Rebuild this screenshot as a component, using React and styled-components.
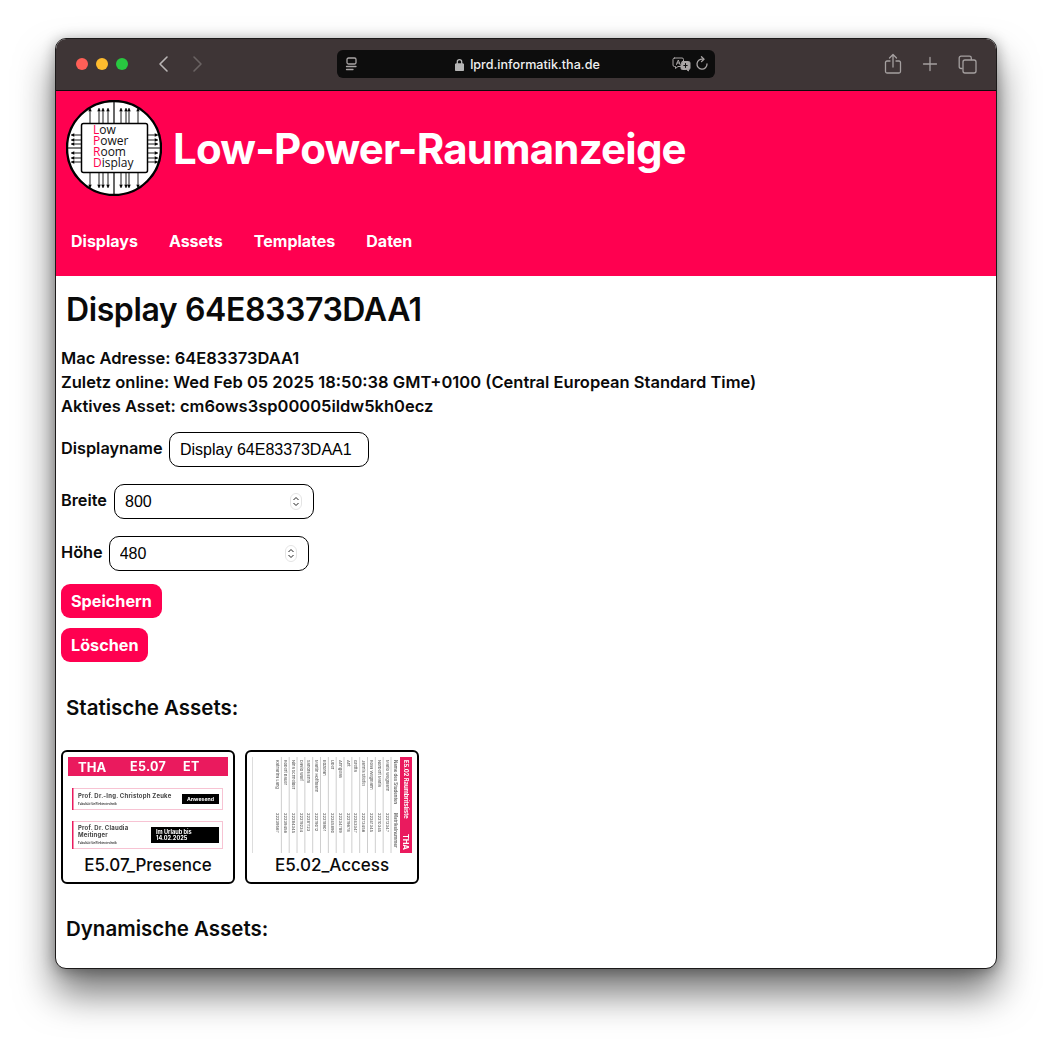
import React from "react";
import styled, { createGlobalStyle } from "styled-components";

const RED = "#ff0050";

const GlobalStyle = createGlobalStyle`
  html, body {
    margin: 0;
    padding: 0;
    background: #fff;
  }
  body {
    width: 1052px;
    height: 1042px;
    overflow: hidden;
    font-family: Inter, "Liberation Sans", sans-serif;
  }
`;

const Stage = styled.div`
  padding: 38px 55px 0;
  height: 1042px;
  box-sizing: border-box;
`;

const Window = styled.div`
  width: 942px;
  height: 931px;
  box-sizing: border-box;
  border: 1px solid #1c1a1a;
  border-radius: 11px;
  overflow: hidden;
  background: #fff;
  box-shadow: 0 24px 38px rgba(0, 0, 0, 0.55), 0 2px 14px rgba(0, 0, 0, 0.32);
`;

const TitleBar = styled.div`
  height: 52px;
  box-sizing: border-box;
  background: #3e3536;
  border-bottom: 1px solid #0c0a0a;
  display: flex;
  align-items: center;
  padding: 0 19px 1px 20px;
`;

const Dots = styled.div`
  display: flex;
  gap: 8px;
`;

const Dot = styled.span`
  width: 12px;
  height: 12px;
  border-radius: 50%;
  background: ${(p) => p.$color};
`;

const NavArrows = styled.div`
  display: flex;
  gap: 23px;
  margin-left: 29px;
  width: 56px;
`;

const Icon = styled.svg`
  display: block;
  flex: none;
  fill: none;
  stroke: ${(p) => p.$stroke || "#a9a5a5"};
  stroke-width: ${(p) => p.$sw || 1.3};
  stroke-linecap: round;
  stroke-linejoin: round;
`;

const AddressBar = styled.div`
  width: 378px;
  height: 28px;
  margin-left: 124px;
  background: #0d0d0d;
  border-radius: 6px;
  display: flex;
  align-items: center;
  padding: 0 6px 0 8px;
  box-sizing: border-box;
  color: #f0f0f0;
`;

const Url = styled.div`
  flex: 1;
  display: flex;
  justify-content: center;
  align-items: center;
  gap: 6px;
  font-size: 12.6px;
  font-weight: 500;
  padding-left: 25px;
`;

const AddressTools = styled.div`
  display: flex;
  align-items: center;
  gap: 4px;
`;

const WindowTools = styled.div`
  margin-left: auto;
  display: flex;
  align-items: center;
  gap: 20px;
`;

const Header = styled.header`
  background: ${RED};
  height: 185px;
  box-sizing: border-box;
  padding: 9px 10px 0;
  color: #fff;
`;

const Brand = styled.div`
  display: flex;
  align-items: center;
  gap: 11px;
`;

const Title = styled.h1`
  margin: 0;
  padding-top: 1px;
  font-size: 42px;
  font-weight: 700;
  letter-spacing: -0.8px;
  line-height: 94px;
`;

const Nav = styled.nav`
  display: flex;
  gap: 31px;
  margin-top: 33px;
  padding-left: 5px;
`;

const NavLink = styled.a`
  font-size: 16px;
  font-weight: 700;
  line-height: 24px;
  color: #fff;
`;

const Main = styled.main`
  padding: 14px 5px 0;
  color: #0a0a0a;
`;

const PageTitle = styled.h2`
  margin: 0 0 16px 5px;
  font-size: 32px;
  font-weight: 600;
  line-height: 40px;
  letter-spacing: -0.4px;
`;

const InfoLine = styled.div`
  font-size: 16.5px;
  font-weight: 600;
  line-height: 24px;
`;

const Form = styled.form`
  margin-top: 14px;
  display: flex;
  flex-direction: column;
  align-items: flex-start;
`;

const Field = styled.label`
  display: flex;
  align-items: center;
  gap: 6px;
  height: 35px;
  margin-bottom: 17px;
  font-size: 16.3px;
  font-weight: 600;
  line-height: 32px;

  &:last-of-type {
    margin-bottom: 13px;
  }
`;

const FieldLabel = styled.span`
  display: block;
  margin-top: -3px;
  min-width: ${(p) => p.$width}px;
`;

const InputBox = styled.span`
  position: relative;
  display: block;
`;

const TextInput = styled.input`
  display: block;
  width: 200px;
  height: 35px;
  box-sizing: border-box;
  border: 1px solid #000;
  border-radius: 10px;
  padding: 0 10px;
  outline: none;
  background: #fff;
  color: #000;
  font-family: "Liberation Sans", Arial, sans-serif;
  font-size: 16px;
`;

const Stepper = styled.svg`
  position: absolute;
  right: 12px;
  top: 9px;
  width: 12px;
  height: 17px;
  fill: none;
  stroke: #222;
  stroke-width: 1;
`;

const ActionButton = styled.button`
  display: block;
  height: 34px;
  margin-bottom: 10px;
  padding: 0 10px;
  border: 0;
  border-radius: 9px;
  background: ${RED};
  color: #fff;
  font-family: inherit;
  font-size: 16.2px;
  font-weight: 700;
`;

const SectionTitle = styled.h3`
  margin: ${(p) => p.$top}px 0 0 5px;
  font-size: 20.5px;
  font-weight: 600;
  line-height: 28px;
`;

const AssetGrid = styled.div`
  display: flex;
  gap: 10px;
  margin-top: 28px;
`;

const AssetCard = styled.div`
  width: 174px;
  height: 134px;
  box-sizing: border-box;
  border: 2px solid #000;
  border-radius: 6px;
  padding: 5px 5px 0;
  display: flex;
  flex-direction: column;
  align-items: center;
`;

const Thumb = styled.svg`
  display: block;
  width: 160px;
  height: 96px;
  flex: none;
  filter: blur(0.4px);
`;

const AssetName = styled.div`
  margin-top: 1px;
  font-size: 17px;
  font-weight: 500;
  line-height: 22px;
`;

const TOP_PINS = [90, 99, 103, 108, 121, 126, 129, 138];
const SIDE_PINS = [135, 140, 144, 153, 158, 162];

function Logo() {
  // drawn in page pixels, offset by the logo box at 66,100
  return (
    <Icon width="96" height="96" viewBox="66 100 96 96" $stroke="#000">
      <circle cx="114" cy="148" r="47" fill="#fff" stroke="#000" strokeWidth="2.4" />
      <path d="M114 101V195M67 148H161" stroke="#000" strokeWidth="1.2" />
      {TOP_PINS.map((x) => (
        <g key={x} strokeWidth="0.9" stroke="#000" fill="#000">
          <path d={`M${x} 109V123M${x} 172V187`} />
          <path d={`M${x - 1.4} 111L${x} 108L${x + 1.4} 111ZM${x - 1.4} 185L${x} 188L${x + 1.4} 185Z`} strokeWidth="0.3" />
        </g>
      ))}
      {SIDE_PINS.map((y) => (
        <g key={y} strokeWidth="0.9" stroke="#000" fill="#000">
          <path d={`M72 ${y}H81M147 ${y}H157`} />
          <path d={`M74 ${y - 1.4}L71 ${y}L74 ${y + 1.4}ZM155 ${y - 1.4}L158 ${y}L155 ${y + 1.4}Z`} strokeWidth="0.3" />
        </g>
      ))}
      <rect x="81.500" y="123.500" width="66" height="49" rx="2" fill="#fff" stroke="#000" strokeWidth="1.5" />
      <text fontFamily="'Open Sans', 'Liberation Sans', sans-serif" fontSize="12" fontWeight="500" stroke="none" fill="#111">
        <tspan x="93" y="134" fill={RED}>L</tspan><tspan>ow</tspan>
        <tspan x="93" y="145" fill={RED}>P</tspan><tspan>ower</tspan>
        <tspan x="93" y="156" fill={RED}>R</tspan><tspan>oom</tspan>
        <tspan x="93" y="167" fill={RED}>D</tspan><tspan>isplay</tspan>
      </text>
    </Icon>
  );
}

function PresenceThumb() {
  return (
    <Thumb viewBox="0 0 160 96">
      <rect width="160" height="96" fill="#fff" />
      <rect y="0" width="160" height="19" fill="#ea1a5e" />
      <g fontFamily="Inter, sans-serif" fontWeight="700" fill="#fff">
        <text x="10" y="14.500" fontSize="13" letterSpacing="0">THA</text>
        <text x="62" y="14" fontSize="12.500" letterSpacing="0.3">E5.07</text>
        <text x="115" y="14" fontSize="12.500" letterSpacing="0.3">ET</text>
      </g>
      <rect x="4.500" y="31.500" width="150" height="21" fill="#fff" stroke="#f7c3d3" />
      <rect x="4" y="31" width="1.500" height="22" fill="#ea1a5e" />
      <rect x="4.500" y="64.500" width="150" height="27" fill="#fff" stroke="#f7c3d3" />
      <rect x="4" y="64" width="1.500" height="28" fill="#ea1a5e" />
      <g fontFamily="Inter, sans-serif" fontWeight="700" fill="#444">
        <text x="10" y="41" fontSize="6" letterSpacing="0.2">Prof. Dr.-Ing. Christoph Zeuke</text>
        <text x="10" y="47.500" fontSize="3">Fakultät für Elektrotechnik</text>
        <text x="10" y="73" fontSize="6" letterSpacing="0.2">Prof. Dr. Claudia</text>
        <text x="10" y="80" fontSize="6" letterSpacing="0.2">Meitinger</text>
        <text x="10" y="87" fontSize="3">Fakultät für Elektrotechnik</text>
      </g>
      <rect x="114" y="37" width="37" height="10" fill="#000" />
      <rect x="83" y="70" width="68" height="16" fill="#000" />
      <g fontFamily="Inter, sans-serif" fontWeight="700" fill="#fff">
        <text x="119" y="43.800" fontSize="5.200">Anwesend</text>
        <text x="88" y="77" fontSize="5.600">Im Urlaub bis</text>
        <text x="88" y="83" fontSize="5.600">14.02.2025</text>
      </g>
    </Thumb>
  );
}

const STUDENTS = [
  ["Mario Wegmann", "22212347"],
  ["Norbert Maria", "22210345"],
  ["Rosa Wegmann", "22241345"],
  ["Jannis Stiefel", "22213456"],
  ["Gretta", "22243347"],
  ["Ant", "22219678"],
  ["Anngelas", "22234789"],
  ["Uber", "22245890"],
  ["Edzoran", "22218901"],
  ["Martin Hoffmann", "22219012"],
  ["Sandra Ehm", "22281123"],
  ["David Wolf", "22219234"],
  ["Nina Schneider", "22284345"],
  ["Robert Bauer", "22239456"],
  ["Katharina Lang", "22239567"],
];

function AccessThumb() {
  return (
    <Thumb viewBox="0 0 160 96">
      <rect width="160" height="96" fill="#fff" />
      <rect x="148" y="0" width="12" height="96" fill="#ea1a5e" />
      <g transform="translate(152 3) rotate(90)" fontFamily="Inter, sans-serif" fontWeight="700" fill="#fff">
        <text x="0" y="0" fontSize="5.800">E5.02 Raumbritsliste</text>
        <text x="74" y="1" fontSize="7.600" letterSpacing="-0.3">THA</text>
      </g>
      <g transform="translate(141.500 3) rotate(90)" fontFamily="Inter, sans-serif" fontWeight="600" fontSize="4.400" fill="#666">
        <text x="0" y="0">Name des Studenten</text>
        <text x="53" y="0">Matrikelnummer</text>
      </g>
      {STUDENTS.map(([name, id], i) => (
        <g key={name}>
          <path d={`M${139 - i * 7.830} 0V96`} stroke="#c2c2c2" strokeWidth="0.8" />
          <g transform={`translate(${133.700 - i * 7.830} 3) rotate(90)`} fontFamily="Inter, sans-serif" fontWeight="500" fontSize="4" fill="#666">
            <text x="0" y="0">{name}</text>
            <text x="53" y="0">{id}</text>
          </g>
        </g>
      ))}
      <path d="M0.500 0V96" stroke="#d4d4d4" strokeWidth="0.8" />
    </Thumb>
  );
}

export default function App() {
  return (
    <Stage>
      <GlobalStyle />
      <Window>
        <TitleBar>
          <Dots>
            <Dot $color="#ff5f57" />
            <Dot $color="#febc2e" />
            <Dot $color="#28c840" />
          </Dots>
          <NavArrows>
            <Icon width="12" height="18" viewBox="0 0 12 18" $stroke="#b9b5b5" $sw={1.6}>
              <path d="M10 2L3 9L10 16" />
            </Icon>
            <Icon width="12" height="18" viewBox="0 0 12 18" $stroke="#6a6363" $sw={1.6}>
              <path d="M2 2L9 9L2 16" />
            </Icon>
          </NavArrows>
          <AddressBar>
            <Icon width="13" height="14" viewBox="0 0 13 14">
              <rect x="2" y="1" width="9" height="6" rx="1.500" />
              <path d="M1.500 9.500H11M1.500 12.500H8" />
            </Icon>
            <Url>
              <Icon width="9" height="13" viewBox="0 0 9 13" $stroke="#b5b5b5">
                <path d="M2.300 6V3.800a2.200 2.200 0 0 1 4.400 0V6" />
                <rect x="0.500" y="6" width="8" height="6.500" rx="1" fill="#b5b5b5" />
              </Icon>
              lprd.informatik.tha.de
            </Url>
            <AddressTools>
              <Icon width="19" height="15" viewBox="0 0 19 15" $sw={1}>
                <path d="M2.500 1H10a1.500 1.500 0 0 1 1.500 1.500V8A1.500 1.500 0 0 1 10 9.500H6L3.500 11.500V9.500H2.500A1.500 1.500 0 0 1 1 8V2.500A1.500 1.500 0 0 1 2.500 1Z" />
                <path d="M4.500 7.500L6.300 3L8 7.500M5 6H7.500" />
                <path d="M10.500 4.500H16.500A1.500 1.500 0 0 1 18 6V11A1.500 1.500 0 0 1 16.500 12.500V14L14.500 12.500H10.500A1.500 1.500 0 0 1 9 11V8Z" fill="#a9a5a5" />
                <path d="M13.500 6.500L13.500 10.500M11.800 8.500H15.200" stroke="#0d0d0d" />
              </Icon>
              <Icon width="14" height="16" viewBox="0 0 14 16">
                <path d="M8 3.200A5 5 0 1 0 12 8" />
                <path d="M6.500 0.800L9 3.200L6.500 5.600" />
              </Icon>
            </AddressTools>
          </AddressBar>
          <WindowTools>
            <Icon width="18" height="22" viewBox="0 0 18 22" $stroke="#a5a0a0">
              <path d="M9 14V2M5.500 5L9 1.500L12.500 5" />
              <path d="M6 8H3a1.500 1.500 0 0 0-1.500 1.500V18.500A1.500 1.500 0 0 0 3 20H15a1.500 1.500 0 0 0 1.500-1.500V9.500A1.500 1.500 0 0 0 15 8H12" />
            </Icon>
            <Icon width="16" height="16" viewBox="0 0 16 16" $stroke="#a5a0a0">
              <path d="M8 1.500V14.500M1.500 8H14.500" />
            </Icon>
            <Icon width="19" height="19" viewBox="0 0 19 19" $stroke="#a5a0a0">
              <path d="M4 13.500H3A1.800 1.800 0 0 1 1.200 11.700V3A1.800 1.800 0 0 1 3 1.200H11.500A1.800 1.800 0 0 1 13.300 3V4.500" />
              <rect x="5" y="5" width="13" height="13" rx="2" />
            </Icon>
          </WindowTools>
        </TitleBar>

        <Header>
          <Brand>
            <Logo />
            <Title>Low-Power-Raumanzeige</Title>
          </Brand>
          <Nav>
            <NavLink>Displays</NavLink>
            <NavLink>Assets</NavLink>
            <NavLink>Templates</NavLink>
            <NavLink>Daten</NavLink>
          </Nav>
        </Header>

        <Main>
          <PageTitle>Display 64E83373DAA1</PageTitle>
          <InfoLine>Mac Adresse: 64E83373DAA1</InfoLine>
          <InfoLine>Zuletz online: Wed Feb 05 2025 18:50:38 GMT+0100 (Central European Standard Time)</InfoLine>
          <InfoLine>Aktives Asset: cm6ows3sp00005ildw5kh0ecz</InfoLine>

          <Form>
            <Field>
              <FieldLabel $width={102}>Displayname</FieldLabel>
              <InputBox>
                <TextInput defaultValue="Display 64E83373DAA1" />
              </InputBox>
            </Field>
            <Field>
              <FieldLabel $width={47}>Breite</FieldLabel>
              <InputBox>
                <TextInput defaultValue="800" />
                <Stepper viewBox="0 0 12 17">
                  <rect x="0.500" y="0.500" width="11" height="16" rx="5.500" stroke="#e4e4e4" />
                  <path d="M3.500 7L6 4.500L8.500 7M3.500 10L6 12.500L8.500 10" />
                </Stepper>
              </InputBox>
            </Field>
            <Field>
              <FieldLabel $width={41}>Höhe</FieldLabel>
              <InputBox>
                <TextInput defaultValue="480" />
                <Stepper viewBox="0 0 12 17">
                  <rect x="0.500" y="0.500" width="11" height="16" rx="5.500" stroke="#e4e4e4" />
                  <path d="M3.500 7L6 4.500L8.500 7M3.500 10L6 12.500L8.500 10" />
                </Stepper>
              </InputBox>
            </Field>
            <ActionButton type="button">Speichern</ActionButton>
            <ActionButton type="button">Löschen</ActionButton>
          </Form>

          <SectionTitle $top={22}>Statische Assets:</SectionTitle>
          <AssetGrid>
            <AssetCard>
              <PresenceThumb />
              <AssetName>E5.07_Presence</AssetName>
            </AssetCard>
            <AssetCard>
              <AccessThumb />
              <AssetName>E5.02_Access</AssetName>
            </AssetCard>
          </AssetGrid>
          <SectionTitle $top={31}>Dynamische Assets:</SectionTitle>
        </Main>
      </Window>
    </Stage>
  );
}
